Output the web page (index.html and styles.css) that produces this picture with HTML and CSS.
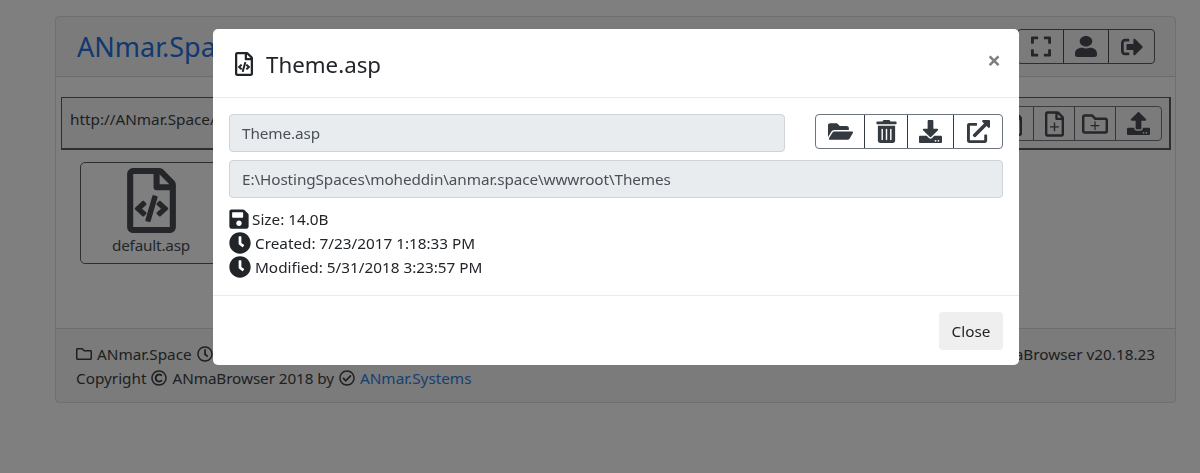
FILE: index.html
```html
<!DOCTYPE html>
<html lang="en">
<head>
<meta charset="utf-8">
<title>ANmaBrowser</title>
<link rel="stylesheet" href="styles.css">
</head>
<body>
<svg class="defs" width="0" height="0" aria-hidden="true">
  <symbol id="i-file-code" viewBox="0 0 384 512"><path d="M149.9 349.1l-.2-.2-32.8-28.9 32.8-28.9c3.6-3.2 4-8.8.8-12.4l-.2-.2-17.4-18.6c-3.4-3.6-9-3.7-12.4-.4l-57.7 54.1c-3.7 3.5-3.7 9.4 0 12.8l57.7 54.1c1.6 1.5 3.8 2.4 6 2.4 2.4 0 4.8-1 6.4-2.8l17.4-18.6c3.3-3.5 3.1-9.1-.4-12.4zm220-251.2L286 14C277 5 264.8-.1 252.1-.1H48C21.5 0 0 21.5 0 48v416c0 26.5 21.5 48 48 48h288c26.5 0 48-21.5 48-48V131.9c0-12.7-5.1-25-14.1-34zM256 51.9l76.1 76.1H256zM336 464H48V48h160v104c0 13.3 10.7 24 24 24h104zM209.6 214c-4.7-1.4-9.5 1.3-10.9 6L144 408.1c-1.4 4.7 1.3 9.6 6 10.9l24.4 7.1c4.7 1.4 9.6-1.4 10.9-6L240 231.9c1.4-4.7-1.3-9.6-6-10.9zm24.5 76.9l.2.2 32.8 28.9-32.8 28.9c-3.6 3.2-4 8.8-.8 12.4l.2.2 17.4 18.6c3.3 3.5 8.9 3.7 12.4.4l57.7-54.1c3.7-3.5 3.7-9.4 0-12.8l-57.7-54.1c-3.5-3.3-9.1-3.2-12.4.4l-17.4 18.6c-3.3 3.5-3.1 9.1.4 12.4z"/></symbol>
  <symbol id="i-folder-open" viewBox="0 0 576 512"><path d="M572.694 292.093L500.27 416.248A63.997 63.997 0 0 1 444.989 448H45.025c-18.523 0-30.064-20.093-20.731-36.093l72.424-124.155A64 64 0 0 1 152 256h399.964c18.523 0 30.064 20.093 20.73 36.093zM152 224h328v-48c0-26.51-21.49-48-48-48H272l-64-64H48C21.49 64 0 85.49 0 112v278.046l69.077-118.418C86.214 242.25 117.989 224 152 224z"/></symbol>
  <symbol id="i-trash" viewBox="0 0 448 512"><path d="M32 464a48 48 0 0 0 48 48h288a48 48 0 0 0 48-48V128H32zm272-256a16 16 0 0 1 32 0v224a16 16 0 0 1-32 0zm-96 0a16 16 0 0 1 32 0v224a16 16 0 0 1-32 0zm-96 0a16 16 0 0 1 32 0v224a16 16 0 0 1-32 0zM432 32H312l-9.4-18.7A24 24 0 0 0 281.1 0H166.8a23.72 23.72 0 0 0-21.4 13.3L136 32H16A16 16 0 0 0 0 48v32a16 16 0 0 0 16 16h416a16 16 0 0 0 16-16V48a16 16 0 0 0-16-16z"/></symbol>
  <symbol id="i-download" viewBox="0 0 512 512"><path d="M216 0h80c13.3 0 24 10.7 24 24v168h87.7c17.8 0 26.7 21.5 14.1 34.1L269.7 378.3c-7.5 7.5-19.8 7.5-27.3 0L90.1 226.1c-12.6-12.6-3.7-34.1 14.1-34.1H192V24c0-13.3 10.7-24 24-24zm296 376v112c0 13.3-10.7 24-24 24H24c-13.3 0-24-10.7-24-24V376c0-13.3 10.7-24 24-24h146.7l49 49c20.1 20.1 52.5 20.1 72.6 0l49-49H488c13.3 0 24 10.7 24 24zm-124 88c0-11-9-20-20-20s-20 9-20 20 9 20 20 20 20-9 20-20zm64 0c0-11-9-20-20-20s-20 9-20 20 9 20 20 20 20-9 20-20z"/></symbol>
  <symbol id="i-upload" viewBox="0 0 512 512"><path d="M296 384h-80c-13.3 0-24-10.7-24-24V192h-87.7c-17.8 0-26.7-21.5-14.1-34.1L242.3 5.7c7.5-7.5 19.8-7.5 27.3 0l152.2 152.2c12.6 12.6 3.7 34.1-14.1 34.1H320v168c0 13.3-10.7 24-24 24zm216-8v112c0 13.3-10.7 24-24 24H24c-13.3 0-24-10.7-24-24V376c0-13.3 10.7-24 24-24h136v8c0 30.9 25.1 56 56 56h80c30.9 0 56-25.1 56-56v-8h136c13.3 0 24 10.7 24 24zm-124 88c0-11-9-20-20-20s-20 9-20 20 9 20 20 20 20-9 20-20zm64 0c0-11-9-20-20-20s-20 9-20 20 9 20 20 20 20-9 20-20z"/></symbol>
  <symbol id="i-external" viewBox="0 0 512 512"><path d="M432 320h-32a16 16 0 0 0-16 16v112H64V128h144a16 16 0 0 0 16-16V80a16 16 0 0 0-16-16H48A48 48 0 0 0 0 112v352a48 48 0 0 0 48 48h352a48 48 0 0 0 48-48V336a16 16 0 0 0-16-16zM488 0H360c-21.37 0-32.05 25.91-17 41l35.73 35.73L135 320.37a24 24 0 0 0 0 34L157.67 377a24 24 0 0 0 34 0l243.61-243.68L471 169c15 15 41 4.5 41-17V24a24 24 0 0 0-24-24z"/></symbol>
  <symbol id="i-user" viewBox="0 0 448 512" preserveAspectRatio="none"><path d="M224 256c70.7 0 128-57.3 128-128S294.7 0 224 0 96 57.3 96 128s57.3 128 128 128zm89.6 32h-16.7c-22.2 10.2-46.9 16-72.9 16s-50.6-5.8-72.9-16h-16.7C60.2 288 0 348.2 0 422.4V464c0 26.5 21.5 48 48 48h352c26.5 0 48-21.5 48-48v-41.6c0-74.2-60.2-134.4-134.4-134.4z"/></symbol>
  <symbol id="i-signout" viewBox="0 0 512 512"><path d="M497 273L329 441c-15 15-41 4.5-41-17v-96H152c-13.3 0-24-10.7-24-24v-96c0-13.3 10.7-24 24-24h136V88c0-21.4 25.9-32 41-17l168 168c9.3 9.4 9.3 24.6 0 34zM192 436v-40c0-6.6-5.4-12-12-12H96c-17.7 0-32-14.3-32-32V160c0-17.7 14.3-32 32-32h84c6.6 0 12-5.4 12-12V76c0-6.6-5.4-12-12-12H96c-53 0-96 43-96 96v192c0 53 43 96 96 96h84c6.6 0 12-5.4 12-12z"/></symbol>
  <symbol id="i-expand" viewBox="0 0 448 512"><path d="M0 180V56c0-13.3 10.7-24 24-24h124c6.6 0 12 5.4 12 12v40c0 6.6-5.4 12-12 12H64v84c0 6.6-5.4 12-12 12H12c-6.6 0-12-5.4-12-12zM288 44v40c0 6.6 5.4 12 12 12h84v84c0 6.6 5.4 12 12 12h40c6.6 0 12-5.4 12-12V56c0-13.3-10.7-24-24-24H300c-6.6 0-12 5.4-12 12zm148 276h-40c-6.6 0-12 5.4-12 12v84h-84c-6.6 0-12 5.4-12 12v40c0 6.6 5.4 12 12 12h124c13.3 0 24-10.7 24-24V332c0-6.6-5.4-12-12-12zM160 468v-40c0-6.6-5.4-12-12-12H64v-84c0-6.6-5.4-12-12-12H12c-6.6 0-12 5.4-12 12v124c0 13.3 10.7 24 24 24h124c6.6 0 12-5.4 12-12z"/></symbol>
  <symbol id="i-save" viewBox="0 0 448 512"><path d="M433.941 129.941l-83.882-83.882A48 48 0 0 0 316.118 32H48C21.49 32 0 53.49 0 80v352c0 26.51 21.49 48 48 48h352c26.51 0 48-21.49 48-48V163.882a48 48 0 0 0-14.059-33.941zM224 416c-35.346 0-64-28.654-64-64 0-35.346 28.654-64 64-64s64 28.654 64 64c0 35.346-28.654 64-64 64zm96-304.52V212c0 6.627-5.373 12-12 12H76c-6.627 0-12-5.373-12-12V108c0-6.627 5.373-12 12-12h228.52c3.183 0 6.235 1.264 8.485 3.515l3.48 3.48A11.996 11.996 0 0 1 320 111.48z"/></symbol>
  <symbol id="i-clock" viewBox="0 0 512 512"><path d="M256 8C119 8 8 119 8 256s111 248 248 248 248-111 248-248S393 8 256 8zm92.49 313l-20 25a16 16 0 0 1-22.49 2.5l-67-49.72a40 40 0 0 1-15-31.23V112a16 16 0 0 1 16-16h32a16 16 0 0 1 16 16v144l58 42.5a16 16 0 0 1 2.49 22.5z"/></symbol>
  <symbol id="i-clock-o" viewBox="0 0 512 512"><path d="M256 8C119 8 8 119 8 256s111 248 248 248 248-111 248-248S393 8 256 8zm0 448c-110.500 0-200-89.500-200-200S145.500 56 256 56s200 89.500 200 200-89.500 200-200 200zm61.800-104.400l-84.900-61.700c-3.100-2.300-4.900-5.900-4.900-9.700V116c0-6.600 5.400-12 12-12h32c6.600 0 12 5.400 12 12v141.700l66.800 48.600c5.400 3.900 6.500 11.400 2.600 16.800L334.600 349c-3.900 5.300-11.400 6.500-16.800 2.600z"/></symbol>
  <symbol id="i-folder-o" viewBox="0 0 512 512"><path d="M464 128H272l-54.630-54.630c-6-6-14.140-9.370-22.630-9.370H48C21.490 64 0 85.490 0 112v288c0 26.510 21.490 48 48 48h416c26.510 0 48-21.490 48-48V176c0-26.510-21.490-48-48-48zm0 272H48V118c0-3.300 2.700-6 6-6h134.100l64 64H464v224z"/></symbol>
  <symbol id="i-copyright" viewBox="0 0 512 512"><path d="M256 8C119.033 8 8 119.033 8 256s111.033 248 248 248 248-111.033 248-248S392.967 8 256 8zm0 448c-110.532 0-200-89.451-200-200 0-110.531 89.451-200 200-200 110.532 0 200 89.451 200 200 0 110.532-89.451 200-200 200zm107.351-101.064c-9.614 9.712-45.530 41.396-104.065 41.396-82.430 0-140.484-61.425-140.484-141.567 0-79.152 60.275-139.401 139.762-139.401 55.531 0 88.738 26.620 97.593 34.779a11.965 11.965 0 0 1 1.936 15.322l-18.155 28.113c-3.841 5.950-11.966 7.282-17.499 2.921-8.595-6.776-31.814-22.538-61.708-22.538-48.303 0-77.916 35.330-77.916 80.082 0 41.589 26.888 83.692 78.277 83.692 32.657 0 56.843-19.039 65.726-27.225 5.270-4.857 13.596-4.039 17.820 1.738l19.865 27.170a11.947 11.947 0 0 1-1.152 15.518z"/></symbol>
  <symbol id="i-check" viewBox="0 0 512 512"><path d="M256 8C119.033 8 8 119.033 8 256s111.033 248 248 248 248-111.033 248-248S392.967 8 256 8zm0 48c110.532 0 200 89.451 200 200 0 110.532-89.451 200-200 200-110.532 0-200-89.451-200-200 0-110.532 89.451-200 200-200m140.204 130.267l-22.536-22.718c-4.667-4.705-12.265-4.736-16.970-.068L215.346 303.697l-59.792-60.277c-4.667-4.705-12.265-4.736-16.970-.069l-22.719 22.536c-4.705 4.667-4.736 12.265-.068 16.971l90.781 91.516c4.667 4.705 12.265 4.736 16.970.068l172.589-171.204c4.704-4.668 4.734-12.266.067-16.971z"/></symbol>
  <symbol id="i-file-plus" viewBox="0 0 384 512"><path d="M369.900 97.900L286 14C277 5 264.800-.1 252.100-.1H48C21.500 0 0 21.500 0 48v416c0 26.500 21.500 48 48 48h288c26.500 0 48-21.500 48-48V131.900c0-12.700-5.100-25-14.100-34zM332.100 128H256V51.900l76.100 76.100zM48 464V48h160v104c0 13.300 10.700 24 24 24h104v288H48z"/><path d="M178 224h28v76h76v28h-76v76h-28v-76h-76v-28h76z"/></symbol>
  <symbol id="i-folder-plus" viewBox="0 0 512 512"><path d="M464 128H272l-54.630-54.630c-6-6-14.140-9.370-22.630-9.370H48C21.490 64 0 85.490 0 112v288c0 26.510 21.490 48 48 48h416c26.510 0 48-21.490 48-48V176c0-26.510-21.490-48-48-48zm0 272H48V118c0-3.300 2.700-6 6-6h134.100l64 64H464v224z"/><path d="M244 204h24v74h74v24h-74v74h-24v-74h-74v-24h74z"/></symbol>
</svg>

<main class="card">
  <header class="card-header">
    <a class="brand" href="#">ANmar.Space</a>
    <div class="btn-group top-tools">
      <button class="tool"><svg class="ico"><use href="#i-expand"/></svg></button>
      <button class="tool"><svg class="ico-user"><use href="#i-user"/></svg></button>
      <button class="tool tool-out"><svg class="ico-out"><use href="#i-signout"/></svg></button>
    </div>
  </header>
  <section class="card-body">
    <div class="address">
      <span class="path">http://ANmar.Space/</span>
      <div class="btn-group addr-tools">
        <button class="atool"><svg class="ico-file0"><use href="#i-file-plus"/></svg></button>
        <button class="atool"><svg class="ico-file"><use href="#i-file-plus"/></svg></button>
        <button class="atool"><svg class="ico-folder"><use href="#i-folder-plus"/></svg></button>
        <button class="atool atool-up"><svg class="ico-up"><use href="#i-upload"/></svg></button>
      </div>
    </div>
    <div class="tiles">
      <div class="tile">
        <svg class="tile-icon"><use href="#i-file-code"/></svg>
        <span class="tile-name">default.asp</span>
      </div>
    </div>
  </section>
  <footer class="card-footer">
    <div class="foot-row">
      <span class="foot-item"><svg class="fi"><use href="#i-folder-o"/></svg>ANmar.Space<svg class="fi"><use href="#i-clock-o"/></svg></span>
      <span>ANmaBrowser v20.18.23</span>
    </div>
    <div class="foot-item">Copyright<svg class="fi"><use href="#i-copyright"/></svg><span class="foot-tight">ANmaBrowser 2018 by</span><svg class="fi"><use href="#i-check"/></svg><a class="foot-link" href="#">ANmar.Systems</a></div>
  </footer>
</main>

<div class="backdrop"></div>

<div class="modal">
  <div class="modal-header">
    <h5 class="modal-title"><svg class="title-icon"><use href="#i-file-code"/></svg><span>Theme.asp</span></h5>
    <span class="close">×</span>
  </div>
  <div class="modal-body">
    <div class="name-row">
      <div class="field field-name">Theme.asp</div>
      <div class="btn-group modal-tools">
        <button class="mtool mtool-open"><svg class="ico-m"><use href="#i-folder-open"/></svg></button>
        <button class="mtool mtool-trash"><svg class="ico-m"><use href="#i-trash"/></svg></button>
        <button class="mtool mtool-dl"><svg class="ico-m"><use href="#i-download"/></svg></button>
        <button class="mtool mtool-ext"><svg class="ico-m"><use href="#i-external"/></svg></button>
      </div>
    </div>
    <div class="field">E:\HostingSpaces\moheddin\anmar.space\wwwroot\Themes</div>
    <ul class="meta">
      <li><svg class="mi mi-save"><use href="#i-save"/></svg>Size: 14.0B</li>
      <li><svg class="mi"><use href="#i-clock"/></svg>Created: 7/23/2017 1:18:33 PM</li>
      <li><svg class="mi"><use href="#i-clock"/></svg>Modified: 5/31/2018 3:23:57 PM</li>
    </ul>
  </div>
  <div class="modal-footer">
    <button class="btn-close">Close</button>
  </div>
</div>
</body>
</html>
```
FILE: styles.css
```css
* { box-sizing: border-box; }
html, body { height: 100%; }
body {
  margin: 0;
  padding: 16px 24px 0 55px;
  overflow: hidden;
  background: #fff;
  color: #212529;
  font: 15.3px/24px "Noto Sans", "Open Sans", sans-serif;
}
.defs { position: absolute; }
svg { fill: currentColor; }
button { font: inherit; color: inherit; background: none; margin: 0; cursor: pointer; }

.card {
  height: 387px;
  display: flex;
  flex-direction: column;
  color: #3c3f42;
  border: 1px solid rgba(0,0,0,.125);
  border-radius: 4px;
}
.card-header {
  height: 60px;
  display: flex;
  justify-content: space-between;
  align-items: center;
  padding: 0 20px;
  background: rgba(0,0,0,.03);
  border-bottom: 1px solid rgba(0,0,0,.125);
}
.brand { font-size: 27px; line-height: 36px; color: #2272e0; text-decoration: none; margin-left: 1px; }
.btn-group { display: flex; border: 1px solid #5a5d60; border-radius: 4px; }
.top-tools { height: 35px; }
.tool { width: 45px; padding: 0; border: 0; border-left: 1px solid #4a4d50; display: flex; align-items: center; justify-content: center; color: #484c52; }
.tool:first-child { border-left: 0; }
.tool-out { width: 46px; }
.ico { width: 20px; height: 23px; }
.ico-user { width: 22px; height: 21px; }
.ico-out { width: 22px; height: 22px; }
.card-body { flex: 1; padding: 20px 4px 0 5px; }
.address {
  height: 53px;
  display: flex;
  align-items: flex-start;
  justify-content: space-between;
  padding: 8px 7px 0 8px;
  border: 1px solid #5a5d60;
  border-bottom-width: 2px;
  border-right-width: 2px;
  background: rgba(0,0,0,.03);
}
.path { padding-top: 1px; }
.addr-tools { height: 35px; border-color: #777b80; }
.atool { width: 41px; padding: 0; border: 0; border-left: 1px solid #666a6e; display: flex; align-items: center; justify-content: center; color: #484c52; }
.atool:first-child { border-left: 0; }
.atool-up { width: 46px; }
.ico-file0 { width: 18px; height: 24px; }
.ico-file { width: 19px; height: 26px; }
.ico-folder { width: 26px; height: 26px; }
.ico-up { width: 23px; height: 23px; }
.tiles { padding: 12px 19px; }
.tile {
  width: 142px;
  height: 102px;
  display: flex;
  flex-direction: column;
  align-items: center;
  padding-top: 5px;
  border: 1px solid #5a5d60;
  border-radius: 5px;
  color: #484c52;
}
.tile-icon { width: 49px; height: 65px; }
.tile-name { letter-spacing: -.2px; }
.card-footer {
  height: 74px;
  padding: 13px 20px 0;
  background: rgba(0,0,0,.03);
  border-top: 1px solid rgba(0,0,0,.125);
}
.foot-row { display: flex; justify-content: space-between; }
.foot-item { display: flex; align-items: center; gap: 5px; }
.foot-tight { letter-spacing: -.1px; }
.fi { width: 16px; height: 16px; }
.foot-link { color: #2f7ee0; text-decoration: none; }

.backdrop { position: fixed; inset: 0; background: rgba(0,0,0,.5); }
.modal {
  position: fixed;
  left: 213px;
  top: 29px;
  width: 806px;
  height: 336px;
  display: flex;
  flex-direction: column;
  background: #fff;
  border-radius: 5px;
}
.modal-header {
  height: 69px;
  display: flex;
  justify-content: space-between;
  padding: 0 16px;
  border-bottom: 1px solid #e9ecef;
}
.modal-title { margin: 0; display: flex; align-items: center; gap: 13px; font-size: 22.3px; font-weight: 400; padding: 3px 0 0 6px; }
.title-icon { width: 18px; height: 24px; color: #212529; margin-top: -2px; }
.close { font-size: 24px; font-weight: 700; color: #7f7f7f; line-height: 24px; margin-top: 19px; padding-right: 2px; }
.modal-body { flex: 1; padding: 16px 16px 0; }
.name-row { display: flex; justify-content: space-between; margin-bottom: 8px; }
.field {
  height: 38px;
  line-height: 36px;
  padding: 0 12px;
  background: #e9ecef;
  border: 1px solid #ced4da;
  border-radius: 4px;
  color: #495057;
  letter-spacing: -.1px;
}
.field-name { width: 556px; }
.modal-tools { height: 35px; border-color: #6c757d; }
.mtool { height: 100%; padding: 0; border: 0; border-left: 1px solid #343a40; display: flex; align-items: center; justify-content: center; color: #343a40; }
.mtool:first-child { border-left: 0; }
.mtool-open { width: 48px; }
.mtool-trash { width: 43px; }
.mtool-dl { width: 46px; }
.mtool-ext { width: 49px; }
.ico-m { width: 25px; height: 23px; }
.meta { list-style: none; margin: 9px 0 0; padding: 0; }
.meta li { display: flex; align-items: center; height: 24px; }
.mi { width: 22px; height: 22px; margin-right: 4px; color: #212529; }
.mi-save { width: 20px; margin-right: 3px; }
.modal-footer {
  height: 70px;
  display: flex;
  align-items: center;
  justify-content: flex-end;
  padding: 0 16px;
  border-top: 1px solid #e9ecef;
}
.btn-close { width: 64px; height: 38px; padding: 0; border: 0; border-radius: 4px; background: #efefef; color: #212529; }
```
